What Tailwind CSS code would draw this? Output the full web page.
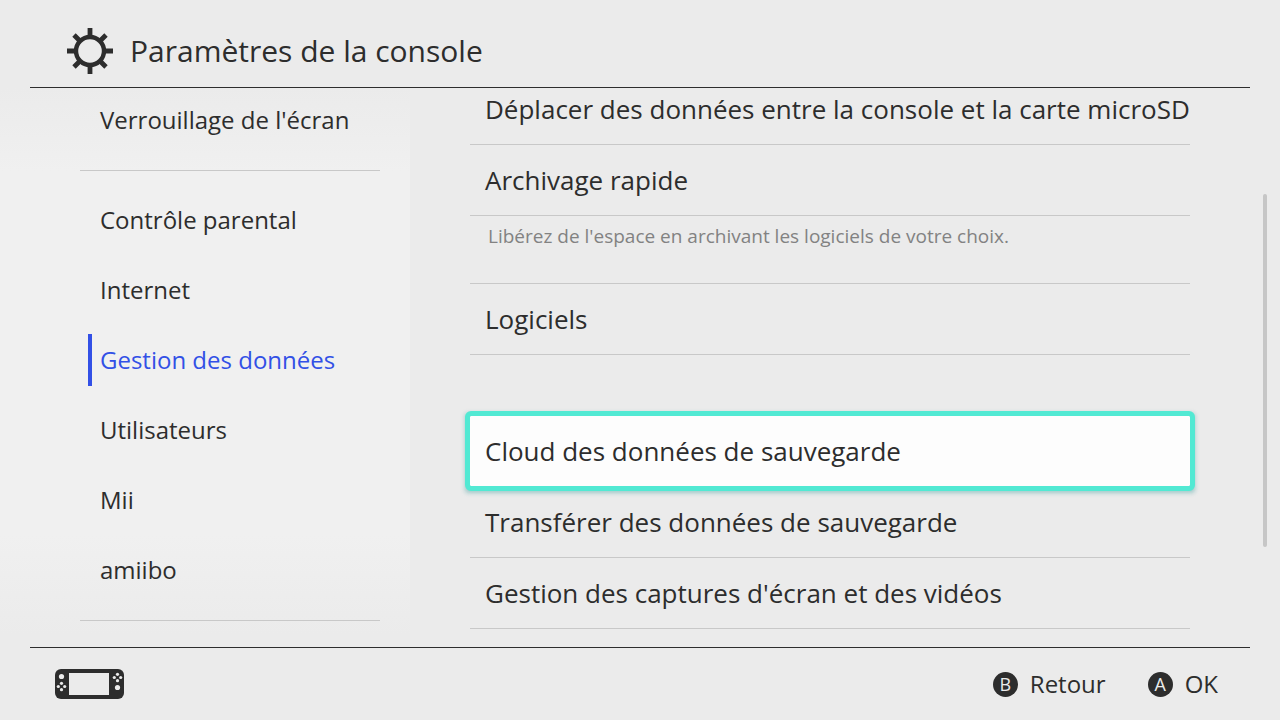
<!DOCTYPE html>
<html lang="fr">
<head>
  <meta charset="UTF-8" />
  <meta name="viewport" content="width=device-width, initial-scale=1" />
  <title>Paramètres de la console</title>
  <script src="https://cdn.jsdelivr.net/npm/@tailwindcss/browser@4"></script>
</head>
<body class="h-screen flex flex-col overflow-hidden bg-[#ebebeb] text-[#2d2d2d] font-['Open_Sans',sans-serif]">
  <header class="mx-[30px] flex h-[88px] shrink-0 items-center gap-4 border-b border-[#2d2d2d] pt-[14px] pl-9">
    <svg class="size-12" viewBox="0 0 48 48" fill="none" stroke="#2d2d2d" aria-hidden="true">
      <circle cx="24" cy="24" r="14" stroke-width="4.4" />
      <path stroke-width="4.8" d="M24 1v10M24 37v10M1 24h10M37 24h10M8 8l7 7M33 33l7 7M40 8l-7 7M15 33l-7 7" />
    </svg>
    <h1 class="text-[30px] leading-10">Paramètres de la console</h1>
  </header>

  <div class="relative flex min-h-0 flex-1">
    <!-- Menu -->
    <nav class="w-[410px] shrink-0 overflow-hidden bg-[linear-gradient(#ebebeb,#f0f0f0_15%,#f0f0f0_80%,#ebebeb_98%)] pr-[30px] pl-20 text-2xl">
      <ul class="-mt-[3px]">
        <li><a href="#verrouillage" class="flex h-[70px] items-center pl-5">Verrouillage de l'écran</a></li>
        <li class="mt-[15px] mb-[14px] h-0 border-t border-[#c8c8c8]"></li>
        <li><a href="#parental" class="flex h-[70px] items-center pl-5">Contrôle parental</a></li>
        <li><a href="#internet" class="flex h-[70px] items-center pl-5">Internet</a></li>
        <li class="flex h-[70px] items-center pl-2">
          <a href="#donnees" aria-current="page" class="flex h-[52px] items-center border-l-4 border-[#3250e6] pl-2 text-[#3250e6]">Gestion des données</a>
        </li>
        <li><a href="#utilisateurs" class="flex h-[70px] items-center pl-5">Utilisateurs</a></li>
        <li><a href="#mii" class="flex h-[70px] items-center pl-5">Mii</a></li>
        <li><a href="#amiibo" class="flex h-[70px] items-center pl-5">amiibo</a></li>
        <li class="mt-[15px] h-0 border-t border-[#c8c8c8]"></li>
      </ul>
    </nav>

    <!-- Options -->
    <main class="min-w-0 flex-1 overflow-hidden pr-[90px] pl-[60px] text-[26px]">
      <div class="-mt-[14px]">
        <button type="button" class="block h-[71px] w-full border-b border-[#c8c8c8] px-[15px] text-left whitespace-nowrap">Déplacer des données entre la console et la carte microSD</button>
        <button type="button" class="block h-[71px] w-full border-b border-[#c8c8c8] px-[15px] text-left">Archivage rapide</button>
        <p class="h-[67px] px-[18px] pt-2 text-[19px] leading-6 text-[#828282]">Libérez de l'espace en archivant les logiciels de votre choix.</p>
        <button type="button" class="block h-[72px] w-full border-y border-[#c8c8c8] px-[15px] text-left">Logiciels</button>
        <button type="button" class="relative mt-[61px] block h-[70px] w-full rounded-[1px] bg-[#fdfdfd] px-[15px] text-left shadow-[0_2px_4px_5px_#2d969666] outline-5 outline-[#52e9d3]">Cloud des données de sauvegarde</button>
        <button type="button" class="mt-px block h-[71px] w-full border-b border-[#c8c8c8] px-[15px] text-left">Transférer des données de sauvegarde</button>
        <button type="button" class="block h-[71px] w-full border-b border-[#c8c8c8] px-[15px] text-left">Gestion des captures d'écran et des vidéos</button>
      </div>
    </main>
    <div class="absolute top-[106px] right-[13px] h-[353px] w-1 rounded-full bg-[#c6c6c6]"></div>
  </div>

  <footer class="mx-[30px] flex h-[73px] shrink-0 items-center justify-between border-t border-[#2d2d2d] pr-8 pl-[25px] text-2xl">
    <svg class="h-[30px] w-[69px]" viewBox="0 0 69 30" aria-label="Console">
      <rect width="69" height="30" rx="6" fill="#2d2d2d" />
      <path fill="#ebebeb" d="M14 4h40v22H14z" />
      <g fill="#ebebeb">
        <circle cx="6.5" cy="7.5" r="2.6" />
        <circle cx="6.5" cy="14.3" r="1.6" /><circle cx="6.5" cy="20.7" r="1.6" />
        <circle cx="3.3" cy="17.5" r="1.6" /><circle cx="9.7" cy="17.5" r="1.6" />
        <circle cx="62.5" cy="18.5" r="2.6" />
        <circle cx="62.5" cy="5.3" r="1.6" /><circle cx="62.5" cy="11.7" r="1.6" />
        <circle cx="59.3" cy="8.5" r="1.6" /><circle cx="65.7" cy="8.5" r="1.6" />
      </g>
    </svg>
    <div class="flex gap-[42px]">
      <button type="button" class="flex items-center gap-3">
        <span class="flex size-[25px] items-center justify-center rounded-full bg-[#2d2d2d] text-lg leading-none font-medium text-[#ebebeb]">B</span>
        Retour
      </button>
      <button type="button" class="flex items-center gap-3">
        <span class="flex size-[25px] items-center justify-center rounded-full bg-[#2d2d2d] text-lg leading-none font-medium text-[#ebebeb]">A</span>
        OK
      </button>
    </div>
  </footer>
</body>
</html>
